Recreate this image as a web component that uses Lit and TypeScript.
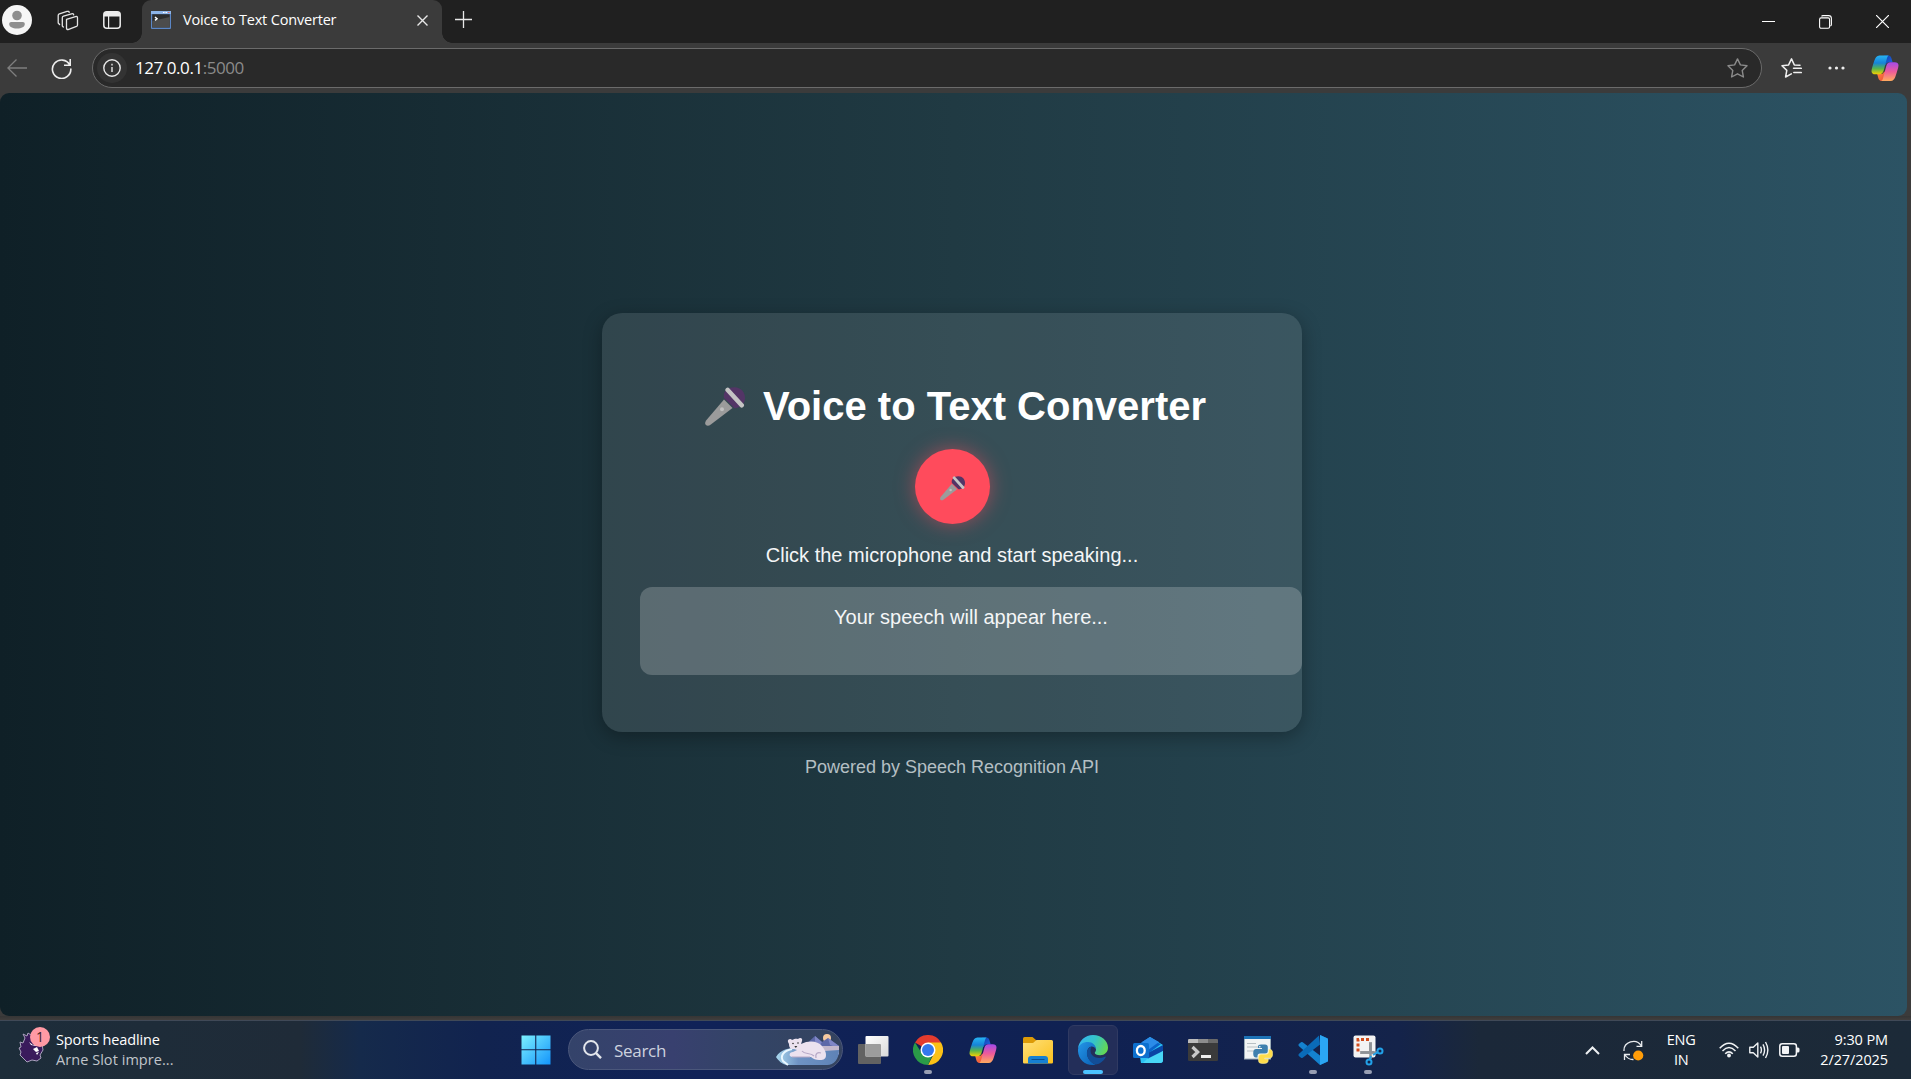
import { LitElement, html, css } from "lit";
import { customElement, property } from "lit/decorators.js";

const copilot = (id: string) => html`<svg width="28" height="27" viewBox="0 0 28 27">
  <defs>
    <linearGradient id="${id}a" x1="0" y1="0" x2="0" y2="1"><stop offset="0" stop-color="#27b4f3"/><stop offset=".4" stop-color="#1683d8"/><stop offset=".7" stop-color="#58b54c"/><stop offset="1" stop-color="#f5d000"/></linearGradient>
    <linearGradient id="${id}b" x1="0" y1="0" x2="0" y2="1"><stop offset="0" stop-color="#a14bea"/><stop offset=".5" stop-color="#ee5a9a"/><stop offset="1" stop-color="#ffab5e"/></linearGradient>
    <linearGradient id="${id}c" x1="0" y1="0" x2="1" y2="1"><stop offset="0" stop-color="#0d3fa8"/><stop offset="1" stop-color="#2366e8"/></linearGradient>
    <linearGradient id="${id}d" x1="0" y1="0" x2="1" y2="1"><stop offset="0" stop-color="#ff8b3d"/><stop offset="1" stop-color="#e8453c"/></linearGradient>
  </defs>
  <path fill="url(#${id}c)" d="M13 .5h4.200c1.900 0 2.800 1.200 3.300 2.900l1.100 3.900h-3.400c-1.800 0-3 1-3.500 2.700L12 8z"/>
  <path fill="url(#${id}d)" d="M15 26H10.500c-1.800 0-2.700-1.200-3.200-2.900l-1.100-4h3.300c2 0 3-1 3.500-2.700L16 18z"/>
  <path fill="url(#${id}a)" d="M17.800.5H8.500C5.700.5 4.300 2.700 3.300 5.800 2 9.800.500 14 .500 16.200.500 18.300 2 19.300 4.200 19.300h4.300c2.300 0 3.500-1.300 4.200-3.700L15.500 5c.7-2.500 1-4.200 2.300-4.500z"/>
  <path fill="url(#${id}b)" d="M10.200 26h9.300c2.800 0 4.200-2.200 5.200-5.300 1.300-4 2.800-8.200 2.800-10.400 0-2.100-1.500-3.100-3.700-3.100h-4.300c-2.300 0-3.500 1.300-4.200 3.700l-2.800 10.600c-.7 2.500-1 4.200-2.300 4.500z"/>
</svg>`;

const mic = (size: number) => html`<svg width=${size} height=${size} viewBox="0 0 40 40">
  <path fill="#9b9b9b" d="M19 12.500 27.500 21 5.500 37.800C3.800 39 1.800 39 .700 37.800-.300 36.500 0 34.800 1.300 33.200z"/>
  <path fill="#533566" d="M19 11C17.500 5 22.500.200 29.500.300 36 .500 40 5.500 40 11c0 6-4.500 10-10.500 10.200z"/>
  <path stroke="#c4c4c4" stroke-width="4.600" stroke-linecap="round" d="M22.700 3 36.700 18.300"/>
  <circle cx="17" cy="22.200" r="2" fill="#c0c0c0"/>
</svg>`;

const icons = {
  avatar: html`<svg width="30" height="30" viewBox="0 0 30 30"><circle cx="15" cy="15" r="15" fill="#f6f6f6"/><circle cx="15" cy="10.500" r="4.800" fill="#8e8e8e"/><path fill="#8e8e8e" d="M9.200 17h11.600c1.200 0 2 .8 2 2 0 2.900-3.200 4.500-7.800 4.500S7.200 21.900 7.200 19c0-1.200.8-2 2-2z"/></svg>`,
  workspaces: html`<svg width="22" height="21" viewBox="0 0 22 21" fill="none" stroke="#e4e4e4" stroke-width="1.300" stroke-linejoin="round" stroke-linecap="round"><path d="M9.500 9.300 18.500 6.600q2-.6 2 1.300v7q0 1.100-1 1.500l-7.800 2.900q-2.200.8-2.200-1.400z"/><path d="M6.300 17 5.300 16V7.800q0-1.200 1.200-1.600L14.500 3.800q2-.5 2.200 1"/><path d="M2.600 14.500 1.200 13V5.500q0-1.200 1.200-1.600L10 1.400q2-.5 2.200 1"/></svg>`,
  tabs: html`<svg width="18" height="18" viewBox="0 0 18 18"><rect x=".8" y=".8" width="16.400" height="16.400" rx="3" fill="none" stroke="#ededed" stroke-width="1.500"/><path fill="#ededed" d="M1 5.500V3.500Q1 1 3.500 1h11Q17 1 17 3.500v2z"/><path stroke="#ededed" stroke-width="1.200" d="M5.600 5v12"/></svg>`,
  console: html`<svg width="20" height="18" viewBox="0 0 20 18"><rect width="20" height="18" rx="1" fill="#5b87c7"/><rect x="0" y="0" width="20" height="3" fill="#8db4e8"/><path d="M12 1.500h1.500m1 0H16" stroke="#fff" stroke-width="1"/><path d="M17 1.500h1.500" stroke="#d66" stroke-width="1"/><rect x="1.200" y="3.200" width="17.600" height="13.300" fill="#2c2c2c"/><path fill="#4c4c4c" d="M1.200 10 18.800 6v10.500H1.200z"/><path d="m4 6 2 1.700L4 9.400" fill="none" stroke="#fff" stroke-width="1.500"/></svg>`,
  close: html`<svg width="11" height="11" viewBox="0 0 11 11" stroke="#e8e8e8" stroke-width="1.400"><path d="m.5.5 10 10m0-10-10 10"/></svg>`,
  plus: html`<svg width="18" height="18" viewBox="0 0 18 18" stroke="#e8e8e8" stroke-width="1.300"><path d="M8.500 0v17M0 8.500h17"/></svg>`,
  min: html`<svg width="13" height="14" viewBox="0 0 13 14"><path d="M0 6.500h13" stroke="#fff"/></svg>`,
  restore: html`<svg width="13" height="14" viewBox="0 0 13 14" fill="none" stroke="#fff" stroke-width="1.100"><rect x=".6" y="2.900" width="10" height="10.300" rx="1.500"/><path d="M2.500 1.400Q3 .600 4 .600h5.600Q12.400.600 12.400 3.400v6.200q0 1-1 1.500"/></svg>`,
  winClose: html`<svg width="13" height="13" viewBox="0 0 13 13" stroke="#fff" stroke-width="1.200"><path d="m0 0 13 13M13 0 0 13"/></svg>`,
  back: html`<svg width="20" height="18" viewBox="0 0 20 18" fill="none" stroke="#7f7f7f" stroke-width="1.300"><path d="M9.500.5.900 9l8.600 8.500M1 9h19"/></svg>`,
  reload: html`<svg width="21" height="21" viewBox="0 0 21 21" fill="none" stroke="#ededed" stroke-width="1.600"><path d="M18.800 7A9.200 9.200 0 1 0 19.800 10.500M19.200 1v6.200H13"/></svg>`,
  info: html`<svg width="18" height="18" viewBox="0 0 18 18"><circle cx="9" cy="9" r="8.200" fill="none" stroke="#e8e8e8" stroke-width="1.400"/><path stroke="#e8e8e8" stroke-width="1.400" d="M9 8v5M9 4.800v1.600"/></svg>`,
  star: html`<svg width="21" height="20" viewBox="0 0 21 20" fill="none" stroke="#8b8b8b" stroke-width="1.400" stroke-linejoin="round"><path d="m10.500.9 2.900 6 6.600.9-4.800 4.600 1.200 6.600-5.900-3.200L4.600 19l1.200-6.600L1 7.800l6.600-.9z"/></svg>`,
  favorites: html`<svg width="21" height="20" viewBox="0 0 21 20" fill="none" stroke="#f0f0f0" stroke-width="1.500" stroke-linejoin="round" stroke-linecap="round"><path d="M19 7.300 13.300 6.900 10.500.9 7.600 6.900 1 7.800l4.800 4.600L4.600 19l5.700-3.100"/><path d="M14 10.300h6.300M12.500 10.300h1M12.800 14.600h7.500"/></svg>`,
  more: html`<svg width="17" height="4" viewBox="0 0 17 4" fill="#ededed"><circle cx="2" cy="2" r="1.600"/><circle cx="8.500" cy="2" r="1.600"/><circle cx="15" cy="2" r="1.600"/></svg>`,
  lion: html`<svg width="34" height="38" viewBox="0 0 34 38"><path fill="#3a1a5c" stroke="#aaa2bd" stroke-width="1" d="M7 12 5 8l4 2 1-3 3 2 7 1 4 8 1 6-3 5 1 3-4 3-5-1-5 2-4-4-3-3 1-3-2-4 2-1-1-5 3 1z"/><path fill="#fff" d="m11 16 4 3 4-2-1 3-5-1zM15 23l4-2 2 4-3 1zM18 27l3-1-2 3z"/><circle cx="22" cy="11" r="10" fill="#ff99a4"/></svg>`,
  windows: html`<svg width="30" height="30" viewBox="0 0 30 30"><defs><linearGradient id="win" x1="0" y1="0" x2="1" y2="1"><stop offset="0" stop-color="#7cf0ff"/><stop offset="1" stop-color="#1394fb"/></linearGradient></defs><path fill="url(#win)" d="M.500.500h13.700v13.700H.5zM15.300.500H29.500v13.700H15.300zM.500 15.300h13.700V29.500H.500zM15.300 15.300h14.200V29.500H15.300z"/></svg>`,
  search: html`<svg width="19" height="19" viewBox="0 0 19 19" fill="none" stroke="#e3e6ec" stroke-width="2"><circle cx="8" cy="8" r="6.900"/><path stroke-width="2.400" d="m12.800 12.800 5.200 5.400"/></svg>`,
  bear: html`<svg width="63" height="32" viewBox="0 0 63 32"><defs><linearGradient id="sky" x1="0" x2="1"><stop offset="0" stop-color="#4a6093"/><stop offset="1" stop-color="#98a5c6"/></linearGradient><linearGradient id="lake" x1="0" x2="1"><stop offset="0" stop-color="#a9d8ee"/><stop offset=".35" stop-color="#6f93c4"/><stop offset="1" stop-color="#5e82b6"/></linearGradient></defs>
    <circle cx="51" cy="4" r="4" fill="#f5c9a0"/><path fill="#5d68a8" d="m28 12 11-10 7 6 6-4 11 8v9H28z"/><path fill="#7f86c6" d="m39 2 7 6-2 3-5-3zM52 4l11 8v2l-9-3z"/><path fill="#c2b7cb" d="M46 12h17v8H48z"/>
    <path fill="url(#lake)" d="M0 23c5-8 12-9 22-9l12 4 29-2c0 9-5 15-12 15H12C6 31 2 26 0 23z"/><path fill="none" stroke="#e9f7ff" stroke-width="2" d="M16 15C7 17 4 22 7 27l5 4"/>
    <path fill="#ece2ef" d="M12 8c-1-3 3-4 4-2 3-1.500 4-1.500 6-1 2-2 5-1 4 2l-1 3c8-4 17-3 21 2 3 4 4 6 4 9 0 5-4 5-7 5-3 0-6-1-8-3H17c-5 0-4-5 0-5l4-2-3-1c-4 0-5-2-5-5z"/><path fill="none" stroke="#b6a8c6" stroke-width="1.200" d="M26 17c3 4 8 1 12 5M40 24c-1-5 2-6 5-5M16 23h18"/><circle cx="17" cy="9.500" r=".8" fill="#333"/><circle cx="22" cy="9" r=".8" fill="#333"/><path fill="#333" d="M18.300 12h3l-1.500 2z"/></svg>`,
  taskview: html`<svg width="32" height="30" viewBox="0 0 32 30"><defs><linearGradient id="tv" x1="0" y1="0" x2="1" y2="1"><stop offset="0" stop-color="#fff"/><stop offset="1" stop-color="#d9d9d9"/></linearGradient></defs><rect x="1" y="9" width="23" height="20" rx="1" fill="#626262"/><rect x="8.500" y="1" width="23" height="20.500" rx="1" fill="url(#tv)"/><path fill="#9c9c9c" d="M8.500 9h14.500q1 0 1 1v11.500H8.500z"/></svg>`,
  chrome: html`<svg width="30" height="30" viewBox="0 0 30 30"><path fill="#e33b2e" d="M15 15 2 7.500A15 15 0 0 1 28 7.500z"/><path fill="#fbc116" d="M15 7.500h13A15 15 0 0 1 15 30l6-11.500z"/><path fill="#2a9b48" d="M2 7.500 8.900 18.600 15 22l4-1-4 9A15 15 0 0 1 2 7.500z"/><circle cx="15" cy="15" r="7.500" fill="#fff"/><circle cx="15" cy="15" r="6" fill="#3478ec"/></svg>`,
  folder: html`<svg width="30" height="27" viewBox="0 0 30 27"><defs><linearGradient id="fo" x1="0" y1="0" x2="1" y2="1"><stop offset="0" stop-color="#ffe07a"/><stop offset="1" stop-color="#fbc11d"/></linearGradient></defs><path fill="#dd9b07" d="M0 1.500Q0 0 1.500 0h8l3.500 3v6H0z"/><path fill="url(#fo)" d="M0 6h10L13.500 3h15Q30 3 30 4.500v20.800q0 1.200-1.200 1.200H1.200Q0 26.500 0 25.300z"/><path fill="#1680d2" d="M5 26.500V22q0-3 3-3h14q3 0 3 3v4.500z"/><path stroke="#0a4f91" d="M8.500 22.500h13"/></svg>`,
  edge: html`<svg width="30" height="30" viewBox="0 0 30 30"><defs><linearGradient id="e1" x1="0" y1=".3" x2="1" y2=".6"><stop offset="0" stop-color="#34b5f1"/><stop offset=".5" stop-color="#35c4c8"/><stop offset="1" stop-color="#65d94f"/></linearGradient><linearGradient id="e2" x1="0" y1="0" x2="1" y2="1"><stop offset="0" stop-color="#2496e8"/><stop offset="1" stop-color="#0a5fb4"/></linearGradient></defs><path fill="url(#e1)" d="M0 13.500C1 5.500 7.200 0 15 0c8.600 0 15 6 15 12.500 0 4.700-3.400 7.700-7.800 7.700-3.500 0-5.400-1.100-5.400-2.300 0-.8 1.200-1.400 1.200-3.400C18 11.500 14.500 8.400 10 8.400 5.500 8.400 1.500 10.500 0 13.500z"/><path fill="url(#e2)" d="M0 14.500C.5 9.500 5 7 10 7c4.600 0 8 3.600 8 7.300-1-2-2.600-2.900-4.200-2.900-3 0-4.800 3-4.800 6.800 0 5 4 9.300 8.500 11.500C7.500 31.500-.5 24 0 14.500z"/><path fill="#124e98" d="M13.800 11.400c-2.700.8-4.900 3.300-4.900 6.900 0 5.300 4.500 10.200 9.100 11.300 4.300-1 7.500-3.700 9.600-7.200.3-.6-.2-1-.8-.7-7.400 3.200-14.300-.4-14.300-6 0-1.700.5-3.200 1.300-4.300z"/></svg>`,
  outlook: html`<svg width="30" height="27" viewBox="0 0 30 27"><path fill="#2bc3f5" d="m5 8 12-8 13 8v15q0 3-3 3H8z"/><path fill="#0a62c9" d="M5 8 14 2l14 5-15 11H5z"/><path fill="#2b8be8" d="m9 5 8-5 9 5-11 8z"/><path fill="#0b46a5" d="m13 17 17-9v6L16 24z"/><path fill="#48d7f7" d="M14 22 30 14v9q0 3-3 3H10z"/><rect y="6" width="16" height="15" rx="1.500" fill="#0d70cf"/><ellipse cx="7.800" cy="13.500" rx="3.900" ry="4.500" fill="none" stroke="#fff" stroke-width="2.300"/></svg>`,
  terminal: html`<svg width="30" height="22" viewBox="0 0 30 22"><rect width="30" height="22" rx="1.200" fill="#3b3b3b"/><path fill="#bcbcbc" d="M0 4V1.200Q0 0 1.200 0H10v4z"/><path fill="#8d8d8d" d="M10 0h10v4H10z"/><path fill="#696969" d="M20 0h8.800Q30 0 30 1.200V4H20z"/><path fill="none" stroke="#c9c9c9" stroke-width="3.200" d="m4.500 8 5.200 5-5.200 5"/><path fill="#efefef" d="M13 16h10v3H13z"/></svg>`,
  python: html`<svg width="29" height="28" viewBox="0 0 29 28"><rect x=".5" y=".5" width="26" height="22.500" fill="#f2f4f4" stroke="#9aabb6"/><path fill="#1d73b6" d="M0 0h27v3H0z"/><path stroke="#b8c0c4" d="M3 7.500h9M3 11h12M3 15h7"/><path fill="#3f80ae" d="M17 8.500h4q2.800 0 2.800 2.500v4q0 2.500-2.800 2.500h-5q-2.500 0-2.500 2.800v1.200H12q-2.800 0-2.800-4.300 0-4.200 3-4.200h5.800v-1h-4v-1.500Q14 8.500 17 8.500z"/><path fill="#ffdc4c" stroke="#fff2a0" stroke-width=".5" d="M24.800 13.500h1.200q2.700 0 2.700 4.200 0 4.300-3 4.300h-5v1h3.500v1.500q0 3-4.200 3h-2q-3.500 0-3.500-2.700v-3.500q0-3 3-3h4.500q2.800 0 2.800-2.800z"/><circle cx="15.800" cy="10.700" r=".8" fill="#fff"/></svg>`,
  vscode: html`<svg width="30" height="30" viewBox="0 0 30 30"><path fill="#1482cf" d="M22 0 30 3.500v23L22 30 .8 11Q0 10 .8 9L3 7.200q.8-.6 1.700 0L22 20.500z"/><path fill="#0a6bb8" d="M22 9.500 4.700 22.800q-.9.600-1.700 0L.8 21q-.8-1 0-2L21 .6z"/><path fill="#2ba6f3" d="M22 0 29 3.200q1 .5 1 1.600v20.400q0 1.100-1 1.600L22 30z"/></svg>`,
  snip: html`<svg width="31" height="31" viewBox="0 0 31 31"><rect x=".5" y=".5" width="22" height="22" rx="2" fill="#f3f3f3"/><path fill="none" stroke="#d14b1c" stroke-width="3" stroke-dasharray="3 2" d="M5 16.500V4.500h13"/><path fill="none" stroke="#a0a3a7" stroke-width="3" d="M17.500 7v11M7 17.500h14"/><path stroke="#8d9297" stroke-width="2.500" d="M17.500 8v16M8 17.500h16"/><circle cx="27" cy="16" r="2.500" fill="none" stroke="#22a1e8" stroke-width="2"/><circle cx="16" cy="27" r="2.500" fill="none" stroke="#22a1e8" stroke-width="2"/><path stroke="#22a1e8" stroke-width="2" d="m20 20 5-3M18 21l-1.500 4"/></svg>`,
  chevron: html`<svg width="15" height="9" viewBox="0 0 15 9" fill="none" stroke="#eef0f3" stroke-width="2"><path d="m1 8 6.500-6.500L14 8"/></svg>`,
  update: html`<svg width="21" height="21" viewBox="0 0 21 21" fill="none" stroke="#e8ebee" stroke-width="1.300"><path d="M1 11C.5 2 13-2.500 18.500 6M18.700 1v5.300h-5.200M1.500 20v-5.500H7M2 15c2 3 5 4.700 8.500 4.500"/><circle cx="15.200" cy="15.500" r="5.100" fill="#ff9d09" stroke="none"/></svg>`,
  wifi: html`<svg width="20" height="16" viewBox="0 0 20 16" fill="none" stroke="#f0f2f4" stroke-width="1.500"><path d="M.7 6.200Q10-3.800 19.300 6.200M3.500 8.900Q10 2.200 16.500 8.900M6.200 11.700Q10 8 13.800 11.700"/><circle cx="10" cy="13.500" r="1.900" fill="#f0f2f4" stroke="none"/></svg>`,
  volume: html`<svg width="20" height="18" viewBox="0 0 20 18" fill="none" stroke="#f0f2f4" stroke-width="1.400" stroke-linejoin="round"><path d="M.8 6.200h3.500L8.800 2v14l-4.500-4.200H.8zM11.500 5.700q1.800 3.300 0 6.600M14 3.300q3.200 5.700 0 11.400M16.500 1q4.700 8 0 16"/></svg>`,
  battery: html`<svg width="21" height="14" viewBox="0 0 21 14"><rect x=".8" y=".8" width="16.600" height="12.400" rx="2.500" fill="none" stroke="#f3f4f6" stroke-width="1.500"/><rect x="3" y="3" width="7" height="8" rx="1" fill="#f3f4f6"/><path fill="#f3f4f6" d="M18 4.500h1q1.500 0 1.500 1.500v2q0 1.500-1.500 1.500h-1z"/></svg>`,
};

@customElement("browser-chrome")
class BrowserChrome extends LitElement {
  static styles = css`
    :host { display: block; font-family: "Open Sans", "Noto Sans", sans-serif; color: #fff; }
    svg { display: block; flex: none; }
    .strip { height: 43px; background: #202020; display: flex; align-items: flex-start; }
    .left { width: 142px; height: 40px; display: flex; align-items: center; box-sizing: border-box; padding-left: 2px; }
    .spaces { margin-left: 25px; }
    .panel { margin-left: 24px; }
    .tab { position: relative; width: 300px; height: 43px; box-sizing: border-box; border-radius: 9px 9px 0 0; background: #3b3b3b; display: flex; align-items: center; padding: 0 14px 3px 9px; }
    .tab::before, .tab::after { content: ""; position: absolute; bottom: 0; width: 10px; height: 10px; }
    .tab::before { left: -10px; background: radial-gradient(circle at 0 0, #202020 9.5px, #3b3b3b 10px); }
    .tab::after { right: -10px; background: radial-gradient(circle at 100% 0, #202020 9.5px, #3b3b3b 10px); }
    .title { flex: 1; margin: 0 0 1px 12px; font-size: 14.5px; letter-spacing: -0.18px; white-space: nowrap; }
    .plus { margin: 11px 0 0 13px; }
    .win { margin-left: auto; display: flex; align-items: center; gap: 44px; height: 43px; padding-right: 22px; }
    .bar { height: 50px; background: #3b3b3b; display: flex; align-items: center; box-sizing: border-box; }
    .back { margin-left: 7px; }
    .reload { margin-left: 24px; }
    .address { margin-left: 20px; width: 1670px; height: 40px; box-sizing: border-box; border: 1px solid #6b6b6b; border-radius: 20px; background: #292929; display: flex; align-items: center; padding: 0 13px 0 4px; }
    .info { width: 30px; height: 30px; border-radius: 50%; background: #333; display: grid; place-items: center; }
    .url { margin: 0 0 2px 8px; flex: 1; font-size: 17px; letter-spacing: -0.45px; }
    .port { color: #8b8b8b; }
    .fav { margin-left: 19px; }
    .more { margin-left: 26px; }
    .copilot { margin-left: 26px; }
  `;
  render() {
    return html`
      <div class="strip">
        <div class="left">${icons.avatar}<span class="spaces">${icons.workspaces}</span><span class="panel">${icons.tabs}</span></div>
        <div class="tab">${icons.console}<span class="title">Voice to Text Converter</span>${icons.close}</div>
        <div class="plus">${icons.plus}</div>
        <div class="win">${icons.min}${icons.restore}${icons.winClose}</div>
      </div>
      <div class="bar">
        <div class="back">${icons.back}</div>
        <div class="reload">${icons.reload}</div>
        <div class="address"><span class="info">${icons.info}</span><span class="url">127.0.0.1<span class="port">:5000</span></span>${icons.star}</div>
        <div class="fav">${icons.favorites}</div>
        <div class="more">${icons.more}</div>
        <div class="copilot">${copilot("top")}</div>
      </div>`;
  }
}

@customElement("voice-page")
class VoicePage extends LitElement {
  static styles = css`
    :host { display: flex; flex-direction: column; align-items: center; box-sizing: border-box; width: 1907px; height: 923px; padding-top: 220px; border-radius: 9px; background: linear-gradient(to right, #0f2027, #203a43, #2c5364); color: #fff; font-family: Arial, "Liberation Sans", sans-serif; }
    svg { display: block; }
    .card { width: 700px; height: 419px; margin-right: 3px; box-sizing: border-box; padding: 0 0 0 38px; border-radius: 20px; background: rgba(255, 255, 255, 0.1); box-shadow: 0 5px 19px rgba(0, 0, 0, 0.3); }
    .inner { width: 624px; display: flex; flex-direction: column; align-items: center; }
    .heading { display: flex; align-items: center; height: 48px; margin: 69px 0 19px; padding-left: 7px; font-weight: 700; font-size: 40px; white-space: nowrap; }
    .heading svg { margin-top: 2px; }
    .name { margin-left: 18px; }
    .mic { width: 75px; height: 75px; border: 0; padding: 3px 0 0; border-radius: 50%; background: #ff4b5c; box-shadow: 0 0 19px rgba(255, 75, 92, 0.5); display: grid; place-items: center; }
    .hint { margin: 19px 0 20px; height: 24px; line-height: 24px; font-size: 20px; color: #f4f6f7; white-space: nowrap; }
    .output { align-self: flex-start; width: 662px; height: 88px; box-sizing: border-box; padding-top: 18px; border-radius: 12px; background: rgba(255, 255, 255, 0.2); text-align: center; line-height: 24px; font-size: 20px; color: #f4f6f7; }
    .powered { margin-top: 24px; margin-right: 3px; line-height: 22px; font-size: 18px; color: #b4bfc3; }
  `;
  render() {
    return html`
      <div class="card"><div class="inner">
        <div class="heading">${mic(40)}<span class="name">Voice to Text Converter</span></div>
        <button class="mic">${mic(25)}</button>
        <div class="hint">Click the microphone and start speaking...</div>
        <div class="output">Your speech will appear here...</div>
      </div></div>
      <div class="powered">Powered by Speech Recognition API</div>`;
  }
}

interface TaskApp { icon: unknown; state?: "open" | "active"; }

@customElement("task-bar")
class TaskBar extends LitElement {
  @property({ attribute: false }) apps: TaskApp[] = [
    { icon: icons.taskview },
    { icon: icons.chrome, state: "open" },
    { icon: copilot("task") },
    { icon: icons.folder },
    { icon: icons.edge, state: "active" },
    { icon: icons.outlook },
    { icon: icons.terminal },
    { icon: icons.python },
    { icon: icons.vscode, state: "open" },
    { icon: icons.snip, state: "open" },
  ];
  static styles = css`
    :host { display: flex; align-items: flex-start; box-sizing: border-box; height: 59px; border-top: 1px solid #404957; background: linear-gradient(to right, #1d2d3a 0, #1f2b38 300px, #152a4b 360px, #11234f 480px, #102258 700px, #102152 1100px, #14234a 1400px, #1b2839 1480px, #1c2a38 100%); color: #fff; font-family: "Open Sans", "Noto Sans", sans-serif; }
    svg { display: block; flex: none; }
    .news { width: 521px; height: 58px; display: flex; box-sizing: border-box; padding: 5px 0 0 18px; }
    .logo { position: relative; }
    .count { position: absolute; left: 12px; top: 1px; width: 20px; line-height: 20px; text-align: center; font-size: 14px; color: #3a1d26; }
    .lines { margin: 4px 0 0 4px; font-size: 14.5px; line-height: 20px; letter-spacing: -0.12px; white-space: nowrap; }
    .sub { color: #c0c5cb; letter-spacing: 0.05px; }
    .start { margin-top: 14px; }
    .search { margin: 8px 0 0 17px; width: 275px; height: 41px; box-sizing: border-box; border: 1px solid #4b577b; border-radius: 21px; background: linear-gradient(to right, #34436a, #38406f 38%, #334466 65%, #34435f); display: flex; align-items: center; padding: 0 3px 0 14px; }
    .label { flex: 1; margin: 1px 0 0 12px; font-size: 17px; letter-spacing: -0.3px; color: #cdd2df; }
    .apps { display: flex; margin: 4px 0 0 5px; gap: 5px; }
    .app { position: relative; width: 50px; height: 50px; box-sizing: border-box; display: grid; place-items: center; border-radius: 6px; border: 1px solid transparent; }
    .app.active { background: #232e59; border-color: #303a62; }
    .mark { position: absolute; bottom: 0; width: 8px; height: 4px; border-radius: 2px; background: #979eb3; }
    .active .mark { width: 20px; background: #4cc2ff; }
    .tray { margin-left: auto; height: 58px; display: flex; align-items: center; padding-right: 23px; font-size: 14.5px; line-height: 20px; letter-spacing: -0.1px; }
    .update { margin-left: 23px; }
    .lang { margin-left: 21px; width: 32px; text-align: center; letter-spacing: -0.2px; }
    .system { margin: 0 20px 0 22px; display: flex; gap: 10px; align-items: center; }
    .clock { text-align: right; white-space: nowrap; }
  `;
  render() {
    return html`
      <div class="news"><div class="logo">${icons.lion}<span class="count">1</span></div>
        <div class="lines"><div>Sports headline</div><div class="sub">Arne Slot impre...</div></div></div>
      <div class="start">${icons.windows}</div>
      <div class="search">${icons.search}<span class="label">Search</span>${icons.bear}</div>
      <div class="apps">${this.apps.map((a) => html`<div class="app ${a.state ?? ""}">${a.icon}${a.state ? html`<span class="mark"></span>` : ""}</div>`)}</div>
      <div class="tray">${icons.chevron}<span class="update">${icons.update}</span>
        <div class="lang">ENG<br />IN</div>
        <div class="system">${icons.wifi}${icons.volume}${icons.battery}</div>
        <div class="clock">9:30 PM<br />2/27/2025</div></div>`;
  }
}

@customElement("app-root")
class AppRoot extends LitElement {
  static styles = css`
    :host { display: flex; flex-direction: column; width: 1911px; height: 1079px; overflow: hidden; background: #3b3b3b; }
    .gap { flex: 1; background: linear-gradient(#353535, #403e3d); }
  `;
  render() {
    return html`<browser-chrome></browser-chrome><voice-page></voice-page><div class="gap"></div><task-bar></task-bar>`;
  }
}
